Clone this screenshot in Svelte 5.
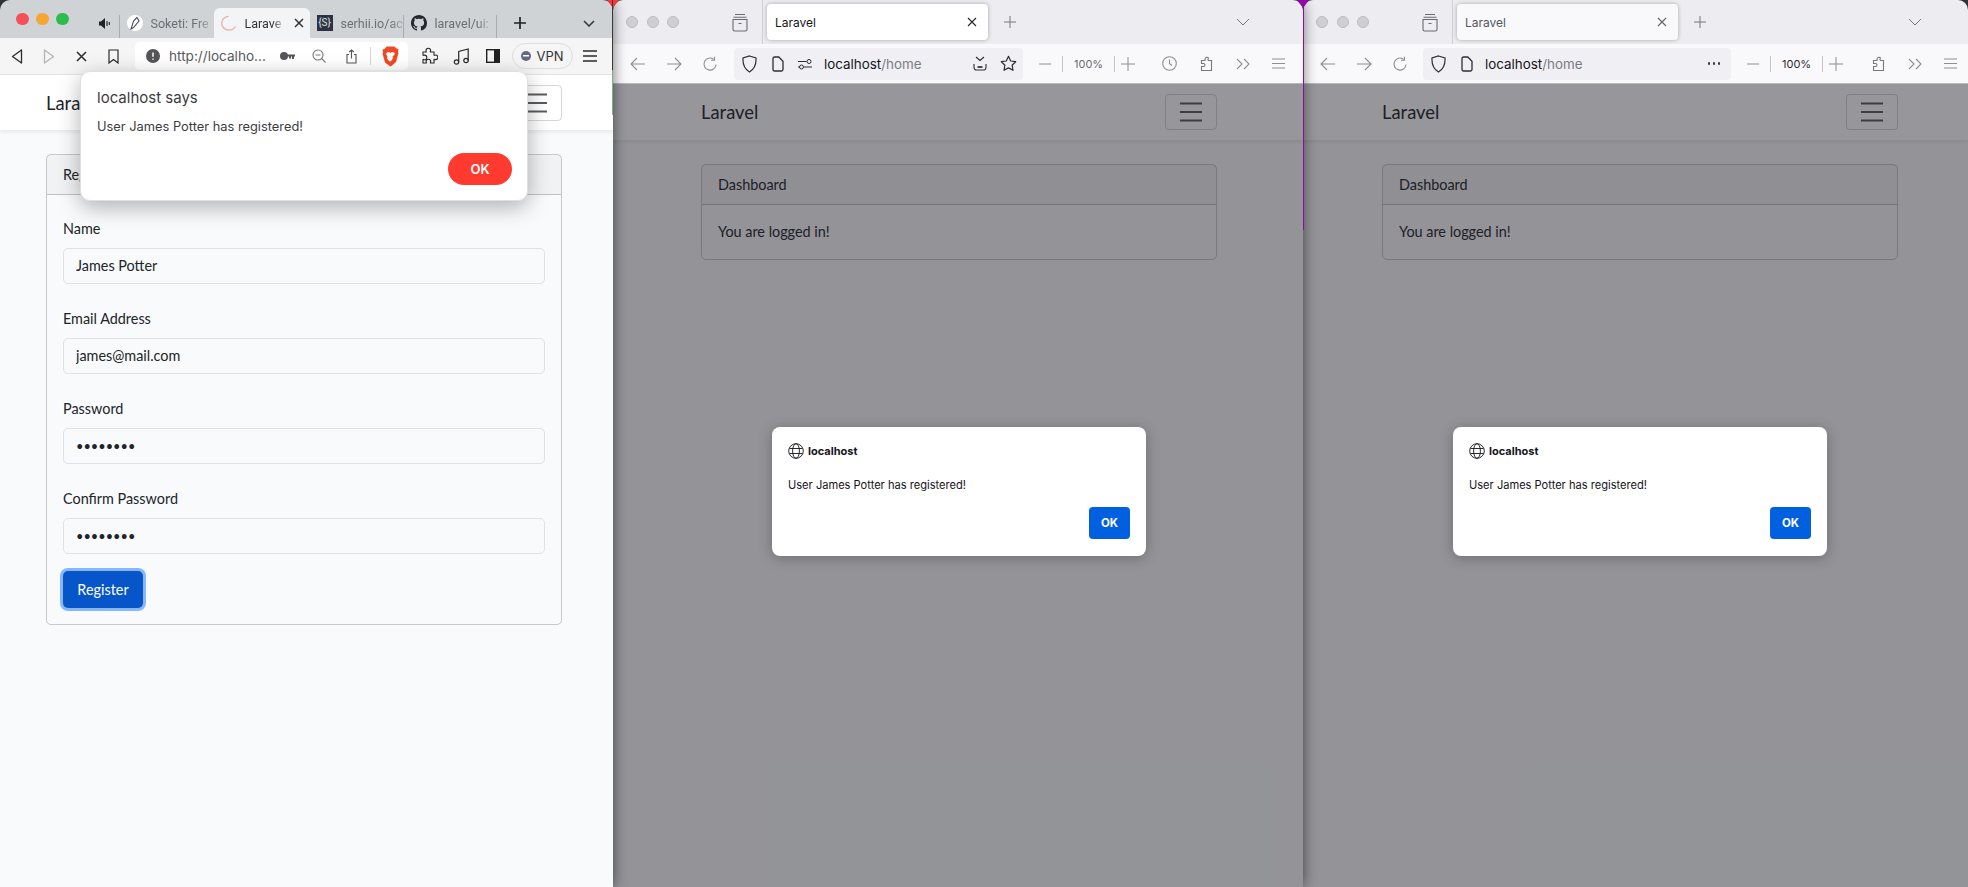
<script>
  const fields = [
    { label: 'Name', type: 'text', value: 'James Potter' },
    { label: 'Email Address', type: 'text', value: 'james@mail.com' },
    { label: 'Password', type: 'password', value: 'password' },
    { label: 'Confirm Password', type: 'password', value: 'password' }
  ];

  const firefoxWindows = [
    { id: 'ff-one', extras: true },
    { id: 'ff-two', extras: false }
  ];
</script>

{#snippet toggler()}
  <div class="toggler">
    <svg width="26" height="24" viewBox="0 0 26 24"><path d="M2 3.5h22M2 12h22M2 20.5h22" stroke="#212529" stroke-opacity=".75" stroke-width="2.2" fill="none" /></svg>
  </div>
{/snippet}

{#snippet firefox(win)}
  <section class="window ff {win.id}">
    <div class="ff-tabs">
      <div class="dots"><i></i><i></i><i></i></div>
      <svg class="archive" width="18" height="20" viewBox="0 0 18 20" fill="none" stroke="#6b6b72" stroke-width="1.1"><path d="M4 2.5h10M2.5 5.2h13M2 7.5h14v10a1.5 1.5 0 0 1-1.5 1.5h-11A1.5 1.5 0 0 1 2 17.5zM7.5 11.5h3" /></svg>
      <span class="tab-sep"></span>
      <div class="ff-tab">
        <span>Laravel</span>
        <svg width="12" height="12" viewBox="0 0 12 12" stroke="#26262c" stroke-width="1.1"><path d="M2 2l8 8M10 2l-8 8" /></svg>
      </div>
      <svg class="plus" width="14" height="14" viewBox="0 0 14 14" stroke="#77777d" stroke-width="1"><path d="M7 1v12M1 7h12" /></svg>
      <svg class="chev" width="14" height="8" viewBox="0 0 14 8" fill="none" stroke="#77777d" stroke-width="1"><path d="M1 1l6 6 6-6" /></svg>
    </div>

    <div class="ff-toolbar">
      <button class="slot"><svg width="16" height="14" viewBox="0 0 16 14" fill="none" stroke="#8e8e93" stroke-width="1.1"><path d="M15 7H1.5M7 1L1 7l6 6" /></svg></button>
      <button class="slot"><svg width="16" height="14" viewBox="0 0 16 14" fill="none" stroke="#8e8e93" stroke-width="1.1"><path d="M1 7h13.5M9 1l6 6-6 6" /></svg></button>
      <button class="slot"><svg width="16" height="16" viewBox="0 0 16 16" fill="none" stroke="#8e8e93" stroke-width="1.1"><path d="M14 8.5A6 6 0 1 1 11.5 3.2M12.5 .8v3.5H9" /></svg></button>

      <div class="urlbar">
        <svg class="shield" width="15" height="18" viewBox="0 0 15 18" fill="none" stroke="#2c2c32" stroke-width="1.2"><path d="M7.5 1L14 3c.4 6.5-1.5 11-6.5 14C2.5 14 .6 9.5 1 3z" /></svg>
        <svg class="doc" width="12" height="16" viewBox="0 0 12 16" fill="none" stroke="#2c2c32" stroke-width="1.3"><path d="M2.5 1h4.300L11 5.200v8.300a1.5 1.5 0 0 1-1.5 1.5h-7A1.5 1.5 0 0 1 1 13.5v-11A1.5 1.5 0 0 1 2.5 1z" /></svg>
        {#if win.extras}
          <svg class="perm" width="14" height="12" viewBox="0 0 14 12" fill="none" stroke="#2c2c32"><path d="M0 3.5h8.5M0 9h1.5M6 9h8" /><circle cx="11" cy="3.5" r="2" /><circle cx="3.5" cy="9" r="2" /></svg>
        {/if}
        <span class="address"><b>localhost</b>/home</span>
        {#if win.extras}
          <svg class="pocket" width="14" height="15" viewBox="0 0 14 15" fill="none" stroke="#2c2c32" stroke-width="1.1"><path d="M3 1l4 3.5L11 1M1 8v3.5A2.5 2.5 0 0 0 3.5 14h7a2.5 2.5 0 0 0 2.5-2.5V8" /><path d="M4.5 11h5" stroke-width="1.7" /></svg>
          <svg class="star" width="17" height="17" viewBox="0 0 17 17" fill="none" stroke="#2c2c32" stroke-width="1.2"><path d="M8.5 1.3l2.2 4.700 5 .7-3.600 3.500.9 5.100-4.500-2.400-4.500 2.400.9-5.100L1.300 6.700l5-.7z" stroke-linejoin="round" /></svg>
        {:else}
          <span class="more"><i></i><i></i><i></i></span>
        {/if}
      </div>

      <div class="zoomgroup">
        <svg width="12" height="2" viewBox="0 0 12 2" stroke="#8e8e93"><path d="M0 1h12" /></svg>
        <span class="vr"></span>
        <span class="pct">100%</span>
        <span class="vr last"></span>
        <svg width="14" height="14" viewBox="0 0 14 14" stroke="#8e8e93"><path d="M7 0v14M0 7h14" /></svg>
      </div>

      {#if win.extras}
        <svg class="clock" width="15" height="15" viewBox="0 0 15 15" fill="none" stroke="#8e8e93" stroke-width="1.1"><circle cx="7.5" cy="7.5" r="6.8" /><path d="M7.5 3.5v4l2.5 2" /></svg>
      {/if}
      <svg class="puzzle" width="14" height="17" viewBox="0 0 14 17" fill="none" stroke="#77777d" stroke-width="1.1"><path d="M5 5.5H1.5v3h2a1.5 1.5 0 0 1 0 3h-2v4h10V5.5H8.5c-1-1-.5-2 0-2.500a2 2 0 0 0-3 0c-.6.8-.5 1.700-.5 2.500z" /></svg>
      <svg class="over" width="14" height="12" viewBox="0 0 14 12" fill="none" stroke="#8e8e93" stroke-width="1.1"><path d="M1 1l5 5-5 5M8 1l5 5-5 5" /></svg>
      <svg class="menu" width="13" height="11" viewBox="0 0 13 11" stroke="#8e8e93" stroke-width="1"><path d="M0 1h13M0 5.5h13M0 10h13" /></svg>
    </div>

    <div class="page">
      <nav class="navbar"><div class="container"><span class="brand">Laravel</span>{@render toggler()}</div></nav>
      <main class="container">
        <div class="card">
          <div class="card-header">Dashboard</div>
          <div class="card-body">You are logged in!</div>
        </div>
      </main>

      <div class="backdrop">
        <div class="ff-dialog">
          <div class="origin">
            <svg width="16" height="16" viewBox="0 0 16 16" fill="none" stroke="#15141a" stroke-width=".9"><circle cx="8" cy="8" r="7.3" /><ellipse cx="8" cy="8" rx="3.4" ry="7.3" /><path d="M1.5 5.5h13M1.5 10.5h13" /></svg>
            <span>localhost</span>
          </div>
          <p>User James Potter has registered!</p>
          <div class="ff-actions"><button>OK</button></div>
        </div>
      </div>
    </div>
  </section>
{/snippet}

<div class="desktop">
  <section class="window brave">
    <div class="br-tabs">
      <div class="lights"><i class="r"></i><i class="y"></i><i class="g"></i></div>
      <svg class="speaker" width="11" height="13" viewBox="0 0 11 13"><path d="M0 4.5h2L6 1v11L2 8.5H0z" fill="#222" /><path d="M8 4v5M10.3 5v3" stroke="#222" stroke-width="1.1" /></svg>
      <div class="tab first">
        <span class="fav"><svg width="10" height="14" viewBox="0 0 10 14" fill="none" stroke="#4c4e70" stroke-width="1.1"><path d="M2 10l-1 3 2.5-1.500L9 5 7 1.500 3.500 5z" /></svg></span>
        <span class="title">Soketi: Fre</span>
      </div>
      <div class="tab active">
        <svg class="spin" width="16" height="16" viewBox="0 0 16 16" fill="none" stroke="#eeb4b4" stroke-width="1.5"><path d="M7 1.5A6.5 6.5 0 0 0 8 15a6 6 0 0 0 6-3" stroke-linecap="round" /></svg>
        <span class="title">Larave</span>
        <svg class="close" width="10" height="10" viewBox="0 0 10 10" stroke="#333" stroke-width="1.5"><path d="M1 1l8 8M9 1l-8 8" /></svg>
      </div>
      <div class="tab">
        <span class="sq">&#123;S&#125;</span>
        <span class="title">serhii.io/ac</span>
      </div>
      <div class="tab sep last">
        <svg width="16" height="16" viewBox="0 0 16 16" fill="#24292f"><path d="M8 0C3.58 0 0 3.58 0 8c0 3.54 2.29 6.53 5.47 7.59.4.07.55-.17.55-.38 0-.19-.01-.82-.01-1.49-2.01.37-2.53-.49-2.69-.94-.09-.23-.48-.94-.82-1.13-.28-.15-.68-.52-.01-.53.63-.01 1.08.58 1.23.82.72 1.21 1.87.87 2.33.66.07-.52.28-.87.51-1.07-1.78-.2-3.64-.89-3.64-3.95 0-.87.31-1.59.82-2.15-.08-.2-.36-1.02.08-2.12 0 0 .67-.21 2.2.82.64-.18 1.32-.27 2-.27.68 0 1.36.09 2 .27 1.53-1.04 2.2-.82 2.2-.82.44 1.1.16 1.92.08 2.12.51.56.82 1.27.82 2.15 0 3.07-1.87 3.75-3.65 3.95.29.25.54.73.54 1.48 0 1.07-.01 1.93-.01 2.2 0 .21.15.46.55.38A8.013 8.013 0 0 0 16 8c0-4.42-3.58-8-8-8z" /></svg>
        <span class="title">laravel/ui:</span>
      </div>
      <svg class="br-plus" width="14" height="14" viewBox="0 0 14 14" stroke="#222" stroke-width="1.7"><path d="M7 1v12M1 7h12" /></svg>
      <svg class="br-chev" width="12" height="7" viewBox="0 0 12 7" fill="none" stroke="#333" stroke-width="1.5"><path d="M1 1l5 5 5-5" /></svg>
    </div>

    <div class="br-toolbar">
      <button class="b-slot"><svg width="12" height="15" viewBox="0 0 12 15" fill="none" stroke="#2b2b2b" stroke-width="1.3"><path d="M10.5 1v13L1.5 7.5z" stroke-linejoin="round" /></svg></button>
      <button class="b-slot"><svg width="12" height="15" viewBox="0 0 12 15" fill="none" stroke="#b5b5b5" stroke-width="1.3"><path d="M1.5 1v13l9-6.5z" stroke-linejoin="round" /></svg></button>
      <button class="b-slot"><svg width="11" height="11" viewBox="0 0 11 11" stroke="#2b2b2b" stroke-width="1.5"><path d="M1 1l9 9M10 1l-9 9" /></svg></button>
      <button class="b-slot"><svg width="11" height="15" viewBox="0 0 11 15" fill="none" stroke="#2b2b2b" stroke-width="1.2"><path d="M1 1h9v13L5.5 10.5 1 14z" /></svg></button>
      <div class="br-url">
        <svg class="info" width="14" height="14" viewBox="0 0 14 14"><circle cx="7" cy="7" r="7" fill="#55555a" /><path d="M7 3.5v4.2M7 9.5v1.300" stroke="#fff" stroke-width="1.5" /></svg>
        <span class="br-address">http://localho...</span>
        <button class="b-slot"><svg width="15" height="8" viewBox="0 0 15 8" fill="#55555a"><circle cx="4" cy="4" r="4" /><path d="M6 2.5h9v2h-1V7h-2V4.500h-1v2H9v-2H6z" /></svg></button>
        <button class="b-slot"><svg width="14" height="14" viewBox="0 0 14 14" fill="none" stroke="#77777d" stroke-width="1.1"><circle cx="6" cy="6" r="5" /><path d="M3.5 6h5M9.7 9.7l3.800 3.800" /></svg></button>
        <button class="b-slot"><svg width="11" height="15" viewBox="0 0 11 15" fill="none" stroke="#55555a" stroke-width="1.1"><path d="M3 5.5H1V14h9V5.500H8M5.5 9.500V1M3.200 3L5.500 1l2.300 2" /></svg></button>
        <span class="br-vr"></span>
        <svg class="lion" width="17" height="21" viewBox="0 0 17 21"><path d="M4.5 .5h8l2 2 2 .5-.5 3 .5 1-2.500 9-4 3.500-1.500 1-1.500-1L3 16.500.5 7.500l.5-1-.5-3 2-.5z" fill="#f04a23" /><path d="M5 6.500l2-.5 1.500 1L10 6l2 .5 1 1.500-2.500 2.500.5 1.500-1.500 2.500-1.500 1-1.500-1-1.500-2.500.5-1.500L4 8z" fill="#fff" /></svg>
      </div>
      <button class="b-slot ext"><svg width="18" height="18" viewBox="0 0 18 18" fill="none" stroke="#2b2b2b" stroke-width="1.1"><path d="M3 5h3.200c.3 0-.2-.8-.2-1.500a2.300 2.300 0 0 1 4.600 0c0 .7-.5 1.500-.2 1.500H14v3.200c0 .3.800-.2 1.500-.2a2.300 2.300 0 0 1 0 4.600c-.7 0-1.500-.5-1.500-.2V16h-3.500c-.3 0 .2-.8.2-1.500a2.300 2.300 0 0 0-4.600 0c0 .7.5 1.500.2 1.500H3v-3.500c0-.3.800.2 1.500.2a2.300 2.300 0 0 0 0-4.600c-.7 0-1.500.5-1.500.2z" /></svg></button>
      <button class="b-slot"><svg width="17" height="17" viewBox="0 0 17 17" fill="none" stroke="#2b2b2b" stroke-width="1.2"><circle cx="3.5" cy="14" r="2.2" /><circle cx="13" cy="12.5" r="2.2" /><path d="M5.7 14V3.500L15.200 1v11.500" /></svg></button>
      <button class="b-slot"><svg width="14" height="14" viewBox="0 0 14 14"><rect x=".7" y=".7" width="12.6" height="12.6" fill="none" stroke="#222" stroke-width="1.4" /><rect x="8" y="1" width="5" height="12" fill="#222" /></svg></button>
      <div class="vpn"><i></i><span>VPN</span></div>
      <button class="b-slot menu-b"><svg width="16" height="12" viewBox="0 0 16 12" stroke="#2b2b2b" stroke-width="1.3"><path d="M1 1h14M1 6h14M1 11h14" /></svg></button>
    </div>

    <div class="page">
      <nav class="navbar"><div class="container"><span class="brand">Laravel</span>{@render toggler()}</div></nav>
      <main class="container">
        <div class="card">
          <div class="card-header">Register</div>
          <form class="card-body register">
            {#each fields as field}
              <div class="field">
                <label for={field.label}>{field.label}</label>
                <input id={field.label} type={field.type} value={field.value} readonly />
              </div>
            {/each}
            <button class="primary" type="button">Register</button>
          </form>
        </div>
      </main>
    </div>

    <div class="alert-box">
      <h4>localhost says</h4>
      <p>User James Potter has registered!</p>
      <div class="alert-actions"><button>OK</button></div>
    </div>
  </section>

  {#each firefoxWindows as win}
    {@render firefox(win)}
  {/each}

  <span class="corner red"></span>
  <span class="corner purple"></span>
  <span class="edge left"></span>
  <span class="edge right"></span>
</div>

<style>
  :global(body) {
    margin: 0;
    background: #3c3c40;
  }

  button {
    border: 0;
    background: none;
    padding: 0;
    font: inherit;
  }

  .desktop {
    position: relative;
    display: flex;
    width: 1968px;
    height: 887px;
    overflow: hidden;
    font-family: Lato, "Noto Sans", sans-serif;
    color: #212529;
  }

  .window {
    position: relative;
    display: flex;
    flex-direction: column;
    flex: none;
    height: 887px;
    border-radius: 10px 10px 0 0;
    overflow: hidden;
    box-shadow: 0 0 14px rgba(0, 0, 0, 0.55);
  }

  .brave { width: 613px; z-index: 3; }
  .ff-one { width: 690px; z-index: 2; }
  .ff-two { width: 665px; z-index: 1; }

  /* page content, same bootstrap markup in every window */
  .page {
    position: relative;
    flex: 1;
    background: #f8fafc;
  }

  .navbar {
    background: #fff;
    box-shadow: 0 2px 4px rgba(0, 0, 0, 0.08);
  }

  .navbar .container {
    display: flex;
    align-items: center;
    justify-content: space-between;
  }

  .container { width: 516px; }
  .brave .container { margin-left: 46px; }
  .ff-one .container { margin-left: 88px; }
  .ff-two .container { margin-left: 79px; }

  .brave .navbar .container { height: 55px; }
  .ff .navbar .container { height: 56px; }

  .brand { font-size: 18.4px; }

  .toggler {
    display: flex;
    align-items: center;
    justify-content: center;
    box-sizing: border-box;
    width: 52px;
    height: 36px;
    border: 1px solid rgba(0, 0, 0, 0.16);
    border-radius: 4px;
  }

  main.container { padding-top: 24px; }

  .card {
    border: 1px solid rgba(0, 0, 0, 0.2);
    border-radius: 5px;
    font-size: 14.4px;
  }

  .card-header {
    height: 39px;
    line-height: 39px;
    padding: 0 16px;
    background: rgba(0, 0, 0, 0.03);
    border-bottom: 1px solid rgba(0, 0, 0, 0.2);
  }

  .card-body {
    padding: 16px;
    line-height: 22px;
  }

  .register {
    display: flex;
    flex-direction: column;
    padding-top: 23px;
  }

  .field { margin-bottom: 24px; }
  .field:nth-of-type(4) { margin-bottom: 17px; }

  label {
    display: block;
    margin-bottom: 8px;
  }

  input {
    display: block;
    box-sizing: border-box;
    width: 100%;
    height: 36px;
    padding: 0 12px 1px;
    border: 1px solid #dee2e6;
    border-radius: 5px;
    background: #f8fafc;
    font: inherit;
    color: #212529;
    outline: none;
  }

  input[type="password"] { font-size: 12.8px; }

  .primary {
    align-self: flex-start;
    width: 80px;
    height: 37px;
    border-radius: 5px;
    background: #0756c9;
    color: #fff;
    box-shadow: 0 0 0 3px #86b7fe;
  }

  /* brave chrome */
  .br-tabs {
    display: flex;
    align-items: center;
    flex: none;
    height: 38px;
    padding-left: 16px;
    box-sizing: border-box;
    background: #cfd3d6;
    font-family: Roboto, sans-serif;
    font-size: 12.5px;
    color: #6b6e72;
  }

  .lights { display: flex; gap: 7.5px; }
  .lights i { width: 12.5px; height: 12.5px; border-radius: 50%; }
  .r { background: #f4505a; }
  .y { background: #f5a731; }
  .g { background: #2dbb4e; }

  .speaker { margin-left: 30px; margin-right: 9px; flex: none; margin-top: 8px; }

  .tab {
    display: flex;
    align-items: center;
    gap: 8px;
    box-sizing: border-box;
    flex: none;
    width: 93px;
    height: 30px;
    margin-top: 8px;
    padding-left: 7px;
    overflow: hidden;
  }

  .tab.first {
    width: 95px;
    padding-left: 8px;
    background: linear-gradient(#a8acb0, #a8acb0) no-repeat left 7px / 1px 23px;
  }

  .tab.active {
    width: 96px;
    background: #f3f4f5;
    border-radius: 6px 6px 0 0;
    color: #333;
  }

  .tab.sep {
    width: 94px;
    padding-left: 8px;
    background:
      linear-gradient(#a8acb0, #a8acb0) no-repeat left 7px / 1px 23px,
      linear-gradient(#a8acb0, #a8acb0) no-repeat right 7px / 1px 23px;
  }

  .title {
    flex: none;
    white-space: nowrap;
    -webkit-mask-image: linear-gradient(90deg, #000 78%, rgba(0, 0, 0, 0.35));
    mask-image: linear-gradient(90deg, #000 78%, rgba(0, 0, 0, 0.35));
  }

  .tab.active .close { margin-left: 5px; }
  .spin { flex: none; }

  .fav {
    display: flex;
    align-items: center;
    justify-content: center;
    flex: none;
    width: 16px;
    height: 16px;
    border-radius: 50%;
    background: #fff;
  }

  .sq {
    flex: none;
    width: 16px;
    height: 16px;
    background: #2c3241;
    color: #dfe3ea;
    font-size: 10px;
    line-height: 16px;
    text-align: center;
  }

  .br-plus { margin-left: 16px; margin-top: 8px; flex: none; }
  .br-chev { margin-left: auto; margin-right: 18px; margin-top: 8px; flex: none; }

  .br-toolbar {
    display: flex;
    align-items: center;
    flex: none;
    height: 37px;
    padding-left: 1px;
    background: #f5f5f5;
    border-bottom: 1px solid #e4e4e4;
    box-sizing: border-box;
  }

  .b-slot {
    display: flex;
    align-items: center;
    justify-content: center;
    flex: none;
    width: 32px;
    height: 28px;
  }

  .br-url {
    display: flex;
    align-items: center;
    box-sizing: border-box;
    width: 273px;
    height: 28px;
    margin-left: 6px;
    padding-left: 11px;
    background: #fff;
    border-radius: 5px;
  }

  .br-address {
    width: 102px;
    margin-left: 9px;
    font-family: Inter, sans-serif;
    font-size: 13.6px;
    color: #5a5a5e;
    white-space: nowrap;
  }

  .br-vr { width: 1px; height: 18px; margin-left: 3px; background: #d5d5d5; }
  .lion { margin-left: 11px; }
  .ext { margin-left: 5px; }

  .vpn {
    display: flex;
    align-items: center;
    justify-content: center;
    gap: 5px;
    box-sizing: border-box;
    width: 61px;
    height: 26px;
    margin-left: 3px;
    border: 1px solid #dedede;
    border-radius: 13px;
    font-family: Inter, sans-serif;
    font-size: 13px;
    color: #333;
  }

  .vpn i {
    width: 10px;
    height: 10px;
    border-radius: 50%;
    background: linear-gradient(#fff, #fff) center / 6px 1.5px no-repeat, #606a80;
  }

  .menu-b { margin-left: 1px; }

  .alert-box {
    position: absolute;
    left: 80px;
    top: 71px;
    z-index: 5;
    box-sizing: border-box;
    width: 448px;
    height: 130px;
    padding: 16px;
    background: #fff;
    border: 1px solid #e0e0e0;
    border-radius: 10px;
    box-shadow: 0 6px 22px rgba(0, 0, 0, 0.3);
    font-family: Inter, sans-serif;
    color: #3c3c3f;
  }

  .alert-box h4 {
    margin: 0;
    font-size: 15px;
    font-weight: 400;
    line-height: 20px;
  }

  .alert-box p {
    margin: 9px 0 0;
    font-size: 12.85px;
    line-height: 20px;
  }

  .alert-actions { display: flex; justify-content: flex-end; margin: 16px -1px 0 0; }

  .alert-actions button {
    width: 64px;
    height: 32px;
    border-radius: 16px;
    background: #ff3b2f;
    color: #fff;
    font-size: 13px;
    font-weight: 600;
  }

  /* firefox chrome */
  .ff-tabs {
    display: flex;
    align-items: center;
    flex: none;
    height: 44px;
    padding-left: 13px;
    box-sizing: border-box;
    background: #edecf1;
    font-family: Inter, sans-serif;
  }

  .dots { display: flex; gap: 8.5px; }
  .dots i {
    width: 12px;
    height: 12px;
    border-radius: 50%;
    background: #cfced3;
    border: 1px solid #bdbcc1;
    box-sizing: border-box;
  }

  .archive { margin-left: 52px; flex: none; }
  .tab-sep { width: 1px; height: 44px; margin-left: 13px; background: #cfcfd4; flex: none; }

  .ff-tab {
    display: flex;
    align-items: center;
    justify-content: space-between;
    box-sizing: border-box;
    flex: none;
    width: 221px;
    height: 36px;
    margin-left: 4px;
    padding: 0 10px 0 8px;
    border-radius: 4px;
    background: #fff;
    box-shadow: 0 0 4px rgba(0, 0, 0, 0.3);
    font-size: 12px;
    color: #15141a;
  }

  .ff-two .ff-tab { background: #f9f9fb; color: #55555a; }
  .ff-two .ff-tab svg { opacity: 0.7; }

  .plus { margin-left: 15px; flex: none; }
  .chev { margin-left: auto; flex: none; }
  .ff-one .chev { margin-right: 53px; }
  .ff-two .chev { margin-right: 46px; }

  .ff-toolbar {
    display: flex;
    align-items: center;
    flex: none;
    height: 40px;
    padding-left: 7px;
    background: #f9f9fb;
    border-bottom: 1px solid #bbb;
    box-sizing: border-box;
  }

  .slot {
    display: flex;
    align-items: center;
    justify-content: center;
    flex: none;
    width: 36px;
    height: 32px;
  }

  .urlbar {
    display: flex;
    align-items: center;
    box-sizing: border-box;
    flex: none;
    height: 32px;
    margin-left: 6px;
    padding-left: 8px;
    border-radius: 4px;
    background: #f0f0f4;
    font-family: Inter, sans-serif;
  }

  .ff-one .urlbar { width: 289px; }
  .ff-two .urlbar { width: 308px; margin-left: 5px; }

  .shield { flex: none; }
  .doc { margin-left: 15px; flex: none; }
  .perm { margin-left: 14px; flex: none; }

  .address {
    margin-left: 12px;
    font-size: 13.4px;
    color: #7a7a80;
    white-space: nowrap;
  }
  .address b { font-weight: 400; color: #15141a; }

  .pocket { margin-left: 51px; flex: none; }
  .star { margin-left: 13px; flex: none; }

  .more { display: flex; gap: 2.5px; margin-left: auto; margin-right: 11px; }
  .more i { width: 2.5px; height: 2.5px; border-radius: 50%; background: #3a3a40; }

  .zoomgroup {
    display: flex;
    align-items: center;
    flex: none;
    margin-left: 16px;
  }

  .zoomgroup .vr { width: 1px; height: 16px; margin-left: 11px; margin-right: 11px; background: #c4c4c8; }
  .zoomgroup .vr.last { margin-right: 6px; }
  .pct { font-size: 11px; color: #6b6b72; width: 29px; font-family: Inter, sans-serif; }
  .ff-two .pct { color: #2b2b30; }

  .clock { margin-left: 27px; flex: none; }
  .puzzle { flex: none; margin-left: 23px; }
  .ff-two .puzzle { margin-left: 29px; }
  .over { flex: none; margin-left: 22px; }
  .menu { flex: none; margin-left: 22px; }

  .backdrop {
    position: absolute;
    inset: 0;
    display: flex;
    justify-content: center;
    align-items: flex-start;
    padding-top: 343px;
    box-sizing: border-box;
    background: rgba(28, 27, 34, 0.46);
  }

  .ff-one .backdrop { padding-left: 2px; }
  .ff-two .backdrop { padding-left: 9px; }

  .ff-dialog {
    box-sizing: border-box;
    width: 374px;
    height: 129px;
    padding: 16px;
    border-radius: 8px;
    background: #fff;
    box-shadow: 0 2px 14px rgba(0, 0, 0, 0.25);
    font-family: Inter, sans-serif;
    color: #15141a;
  }

  .origin {
    display: flex;
    align-items: center;
    gap: 4px;
    font-size: 11px;
    font-weight: 700;
  }

  .ff-dialog p {
    margin: 18px 0 0;
    font-size: 11.1px;
    line-height: 16px;
  }

  .ff-actions { display: flex; justify-content: flex-end; margin-top: 14px; }

  .ff-actions button {
    width: 41px;
    height: 32px;
    border-radius: 4px;
    background: #0060df;
    color: #fff;
    font-size: 11.5px;
    font-weight: 700;
  }

  /* bits of the desktop peeking between windows */
  .corner {
    position: absolute;
    top: 0;
    z-index: 6;
    width: 12px;
    height: 8px;
    clip-path: polygon(0 0, 100% 0, 50% 100%);
  }

  .corner.red { left: 607px; background: #ef3b3b; }
  .corner.purple { left: 1297px; background: #8e0aa8; }

  .edge {
    position: absolute;
    top: 0;
    z-index: 6;
    width: 1px;
  }

  .edge.left {
    left: 612px;
    height: 115px;
    background: linear-gradient(#3a3a3a 0 70px, #7fb08a 70px);
  }

  .edge.right {
    left: 1303px;
    height: 230px;
    background: #8e0aa8;
  }
</style>
